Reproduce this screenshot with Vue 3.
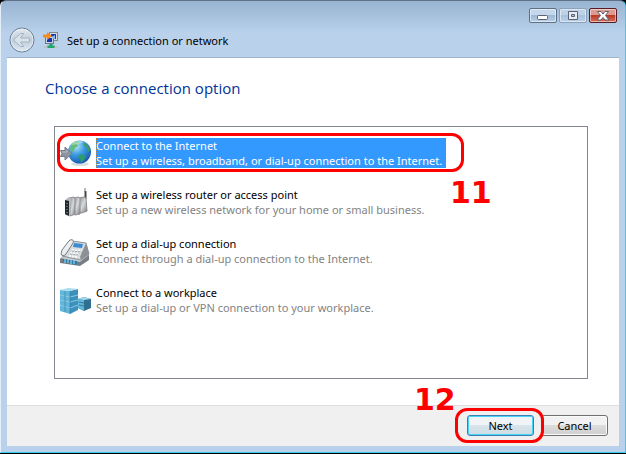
<script setup>
import { ref } from 'vue';

const options = [
    { id: 'internet', title: 'Connect to the Internet', text: 'Set up a wireless, broadband, or dial-up connection to the Internet.' },
    { id: 'router', title: 'Set up a wireless router or access point', text: 'Set up a new wireless network for your home or small business.' },
    { id: 'dialup', title: 'Set up a dial-up connection', text: 'Connect through a dial-up connection to the Internet.' },
    { id: 'workplace', title: 'Connect to a workplace', text: 'Set up a dial-up or VPN connection to your workplace.' }
];

const selected = ref('internet');
</script>

<template>
    <div class="window">
        <header class="title-bar">
            <div class="caption-buttons">
                <button class="caption-btn" aria-label="Minimize">
                    <svg width="12" height="10" viewBox="0 0 12 10"><rect x=".5" y="4.500" width="10" height="4" rx="1" fill="#fff" stroke="#5b6374" /></svg>
                </button>
                <button class="caption-btn dim" aria-label="Maximize">
                    <svg width="12" height="10" viewBox="0 0 12 10"><path d="M1.500.5h9v8h-9zM4.500 3.500v2h3v-2z" fill="#e8edf5" fill-rule="evenodd" stroke="#5b6374" /></svg>
                </button>
                <button class="caption-btn close" aria-label="Close">
                    <svg width="14" height="10" viewBox="0 0 14 10"><path d="M1.500.5h3.500L7 3 9 .5h3.500L9.500 4.500l3.500 4.500H9L7 6.500 5 9H1l3.500-4.500z" fill="#fff" stroke="#59606f" /></svg>
                </button>
            </div>
            <div class="title-row">
                <button class="back-btn" aria-label="Back">
                    <svg width="26" height="26" viewBox="0 0 26 26">
                        <defs>
                            <linearGradient id="glass" x1="0" y1="0" x2="0" y2="1">
                                <stop offset="0" stop-color="#e4e9ef" />
                                <stop offset=".5" stop-color="#bfcddb" />
                                <stop offset="1" stop-color="#dfeaf4" />
                            </linearGradient>
                        </defs>
                        <circle cx="13" cy="13" r="12" fill="url(#glass)" stroke="#66788e" />
                        <circle cx="13" cy="13" r="11" fill="none" stroke="#eef3f8" opacity=".7" />
                        <path d="M4.500 13l7-6.500h3l-3 4.500h9v4h-9l3 4.500h-3z" fill="#dbe3ea" stroke="#a4b2c1" />
                    </svg>
                </button>
                <svg class="app-icon" width="17" height="17" viewBox="0 0 17 17">
                    <rect x="6.500" y=".5" width="8" height="8" fill="#d7dde3" stroke="#7c8894" />
                    <rect x="8" y="2" width="5" height="5" fill="#1c36b5" />
                    <rect x="2.500" y="4.500" width="8" height="7" fill="#ccd5de" stroke="#667889" />
                    <rect x="4" y="6" width="5" height="4" fill="#1733b1" />
                    <path d="M9 5l3-2v5z" fill="#88bdf2" />
                    <path d="M0 2.500h4V0l5 4-5 4V5.500H0z" fill="#f68b22" />
                    <path d="M1 15h14" stroke="#bac5ca" stroke-width="2" />
                    <path d="M6.500 12h3v1.500h2V16h-7v-2.500h2z" fill="#20a56b" />
                </svg>
                <span class="window-title">Set up a connection or network</span>
            </div>
        </header>

        <main class="page">
            <h1>Choose a connection option</h1>
            <ul class="option-list">
                <li v-for="option in options" :key="option.id">
                    <button class="option" :class="{ selected: selected === option.id }" @click="selected = option.id">
                        <svg v-if="option.id === 'internet'" class="option-icon" width="32" height="32" viewBox="0 0 32 32">
                            <defs>
                                <radialGradient id="globe" cx=".35" cy=".25" r=".8">
                                    <stop offset="0" stop-color="#b9e3fb" />
                                    <stop offset=".45" stop-color="#3e9ee2" />
                                    <stop offset="1" stop-color="#1355ae" />
                                </radialGradient>
                            </defs>
                            <ellipse cx="21" cy="28" rx="9" ry="2" fill="#d9dee2" />
                            <circle cx="20.500" cy="16" r="11.500" fill="url(#globe)" />
                            <path d="M12 9c2-3 5-4 8-4l1 2-3 1 1 2-3 2-2 4-3-2z" fill="#63bd76" />
                            <path d="M25 7c3 1 5 4 6 7l-2 2-1-4-3-2z" fill="#3b9f60" />
                            <path d="M20 19l3-1 4 3-2 3-3 3-1-4-2-2z" fill="#2f9a6c" />
                            <path d="M12 9c3-4 9-5 13-3-3 2-8 2-13 3z" fill="#fff" opacity=".4" />
                            <path d="M1.500 14.500H6V11l7 6.500-7 6.500v-3.500H1.500L3 17.500z" fill="#8d95a0" stroke="#747c88" />
                            <path d="M3 16h5v-2" fill="none" stroke="#b7bfc7" />
                        </svg>
                        <svg v-else-if="option.id === 'router'" class="option-icon" width="32" height="32" viewBox="0 0 32 32">
                            <defs>
                                <linearGradient id="fin" x1="0" y1="0" x2="1" y2="1">
                                    <stop offset="0" stop-color="#8e9093" />
                                    <stop offset=".5" stop-color="#d8d9db" />
                                    <stop offset="1" stop-color="#77797d" />
                                </linearGradient>
                            </defs>
                            <path d="M26.500 14V6" stroke="#444" stroke-width="2" />
                            <path d="M26 7V3" stroke="#777" />
                            <path d="M8 32l18-4 3-2-4-1z" fill="#d8d8d8" />
                            <path d="M20 13l5-1q2 0 2 2l1 12-7 2z" fill="url(#fin)" stroke="#8b8d90" />
                            <path d="M15 13l4-1q2 0 2 2v15l-5 1z" fill="url(#fin)" stroke="#919396" />
                            <path d="M11 13l3-1q2 0 2 2v15l-5 2z" fill="url(#fin)" stroke="#8b8d90" />
                            <path d="M6 15l4-3q2 0 2 2l-1 17-5-1z" fill="#b7b9bc" />
                            <path d="M6 15l4 1v15l-4-2z" fill="#24292d" />
                            <path d="M8 18v10" stroke="#5ecf9f" stroke-dasharray="1 2" />
                        </svg>
                        <svg v-else-if="option.id === 'dialup'" class="option-icon" width="32" height="32" viewBox="0 0 32 32">
                            <path d="M1 25l5-5 24 1v5l-9 6-20-3z" fill="#777d82" />
                            <path d="M1 24l7-5 22 2-9 7z" fill="#c7cbd0" />
                            <path d="M3 22L13 7l14 2 3 11-8 6z" fill="#d8dcdf" stroke="#8a9299" />
                            <path d="M27 9l3 11-8 6-1-3z" fill="#8b9195" />
                            <path d="M15 9l9 1-1 4-9-1z" fill="#3c8bd0" />
                            <path d="M13 16l10 1M11 19l9 1M10 22l8 1" stroke="#f9fafa" stroke-width="2" stroke-dasharray="2 1" />
                            <path d="M13 17l10 1M11 20l9 1" stroke="#a0a7ad" stroke-dasharray="2 1" />
                            <path d="M11 6c3-1 4 1 3 3L7 20c-1 2-5 2-5 0l1-4 6-8z" fill="#eceff1" stroke="#737b82" />
                            <path d="M4 25l14 2v4L4 28z" fill="#287faa" />
                            <path d="M6 25v4M9 25v4M12 26v4M15 26v4" stroke="#b1dfed" />
                        </svg>
                        <svg v-else class="option-icon" width="32" height="32" viewBox="0 0 32 32">
                            <path d="M19 16l6-2 7 2v9l-7 3-6-3z" fill="#2f6f91" />
                            <path d="M19 16l6 1v11l-6-3z" fill="#66b6da" />
                            <path d="M19 16l6-2 7 2-7 1z" fill="#a5d9ed" />
                            <path d="M20 19l5 1M20 22l5 1" stroke="#357b9d" />
                            <path d="M1 7l10 1v23L1 28z" fill="#62b6da" />
                            <path d="M11 8l8-2v21l-8 4z" fill="#3b91bb" />
                            <path d="M1 7l8-2 10 1-8 2z" fill="#a7dcf0" />
                            <path d="M1 12l10 2 8-2M1 17l10 2 8-2M1 22l10 3 8-3" fill="none" stroke="#86c8e4" />
                            <path d="M6 8v21M11 8v23" stroke="#2e7ca5" opacity=".6" />
                        </svg>
                        <span class="option-label">
                            <span class="option-title">{{ option.title }}</span>
                            <span class="option-text">{{ option.text }}</span>
                        </span>
                    </button>
                    <template v-if="option.id === 'internet'">
                        <span class="ring ring-option"></span>
                        <span class="step step-option">11</span>
                    </template>
                </li>
            </ul>
        </main>

        <footer class="footer">
            <div class="next-wrap">
                <button class="btn btn-default">Next</button>
                <span class="ring ring-next"></span>
                <span class="step step-next">12</span>
            </div>
            <button class="btn">Cancel</button>
        </footer>
    </div>
</template>

<style>
body {
    margin: 0;
    background: #000;
}
</style>

<style scoped>
.window {
    box-sizing: border-box;
    display: flex;
    flex-direction: column;
    min-height: calc(100vh - 1px);
    padding: 0 6px 6px;
    border: 1px solid #35cdee;
    border-top-color: #5e7186;
    border-left-color: #e4eef8;
    border-radius: 6px 6px 0 0;
    background: linear-gradient(#98b4d2, #b9d1ea 32px);
    font-family: "Noto Sans", "Open Sans", sans-serif;
    font-size: 11px;
    line-height: 15px;
    color: #000;
}

button {
    font: inherit;
    padding: 0;
}

/* Title bar */
.caption-buttons {
    display: flex;
    justify-content: flex-end;
    gap: 2px;
    padding: 7px 2px 0 0;
}

.caption-btn {
    display: flex;
    align-items: center;
    justify-content: center;
    box-sizing: border-box;
    width: 28px;
    height: 15px;
    border: 1px solid #5d7086;
    border-radius: 2px;
    background: linear-gradient(#c5d7ea 50%, #9db8d4 50%, #b9d0e8);
    box-shadow: inset 0 0 0 1px rgba(255, 255, 255, 0.5);
}

.caption-btn.dim {
    border-color: #8ba0b9;
    background: linear-gradient(#bdd1e7 50%, #a9c2dd 50%, #b9d0e8);
}

.caption-btn.close {
    border-color: #571c26;
    background: linear-gradient(#dc9a90 50%, #b93a27 50%, #d9705a);
}

.title-row {
    display: flex;
    align-items: center;
    height: 34px;
    padding-left: 2px;
}

.back-btn {
    display: flex;
    border: none;
    background: none;
}

.app-icon {
    margin: 0 7px 0 8px;
}

/* Page */
.page {
    flex: 1;
    padding: 19px 31px 26px 38px;
    border-top: 1px solid #9fb4ca;
    background: #fff;
}

h1 {
    margin: 0;
    font-family: "Open Sans", "Noto Sans", sans-serif;
    font-size: 15px;
    font-weight: 400;
    line-height: 22px;
    color: #003399;
}

.option-list {
    box-sizing: border-box;
    min-height: 253px;
    margin: 27px 0 0 9px;
    padding: 8px 4px;
    border: 1px solid #828790;
    list-style: none;
}

.option-list li {
    position: relative;
    height: 49px;
}

.option {
    display: flex;
    align-items: center;
    gap: 5px;
    padding: 0;
    border: none;
    background: none;
    text-align: left;
    white-space: nowrap;
}

.option-label {
    display: flex;
    flex-direction: column;
    margin-top: 3px;
    padding-right: 4px;
}

.option-text {
    color: #838383;
}

.option.selected .option-label {
    outline: 1px dotted #b8793d;
    outline-offset: -1px;
    background: #3399ff;
}

.option.selected .option-title,
.option.selected .option-text {
    color: #fff;
}

/* Footer */
.footer {
    display: flex;
    justify-content: flex-end;
    gap: 7px;
    padding: 9px 11px 10px;
    border-top: 1px solid #dfdfdf;
    background: #f0f0f0;
}

.next-wrap {
    position: relative;
}

.btn {
    box-sizing: border-box;
    display: block;
    width: 67px;
    height: 21px;
    border: 1px solid #707070;
    border-radius: 3px;
    background: linear-gradient(#f2f2f2 50%, #dddddd 50%, #cfcfcf);
    box-shadow: inset 0 0 0 1px #fafafa;
    color: #000;
}

.btn-default {
    border-color: #3c7fb1;
    background: linear-gradient(#f0f4f6 50%, #d9e4ea 50%, #cddce4);
    box-shadow: inset 0 0 0 1px #48d4fa;
}

/* Step marks */
.ring {
    position: absolute;
    box-sizing: border-box;
    border: 3px solid #ff0000;
    border-radius: 12px;
    pointer-events: none;
}

.ring-option {
    top: -2px;
    left: -2px;
    width: 407px;
    height: 39px;
}

.ring-next {
    top: -7px;
    left: -12px;
    right: -10px;
    bottom: -7px;
}

.step {
    position: absolute;
    font-family: "DejaVu Sans", Verdana, sans-serif;
    font-size: 30px;
    font-weight: 700;
    line-height: 30px;
    color: #ff0000;
    pointer-events: none;
}

.step-option {
    top: 43px;
    left: 391px;
}

.step-next {
    top: -30px;
    left: -53px;
}
</style>
